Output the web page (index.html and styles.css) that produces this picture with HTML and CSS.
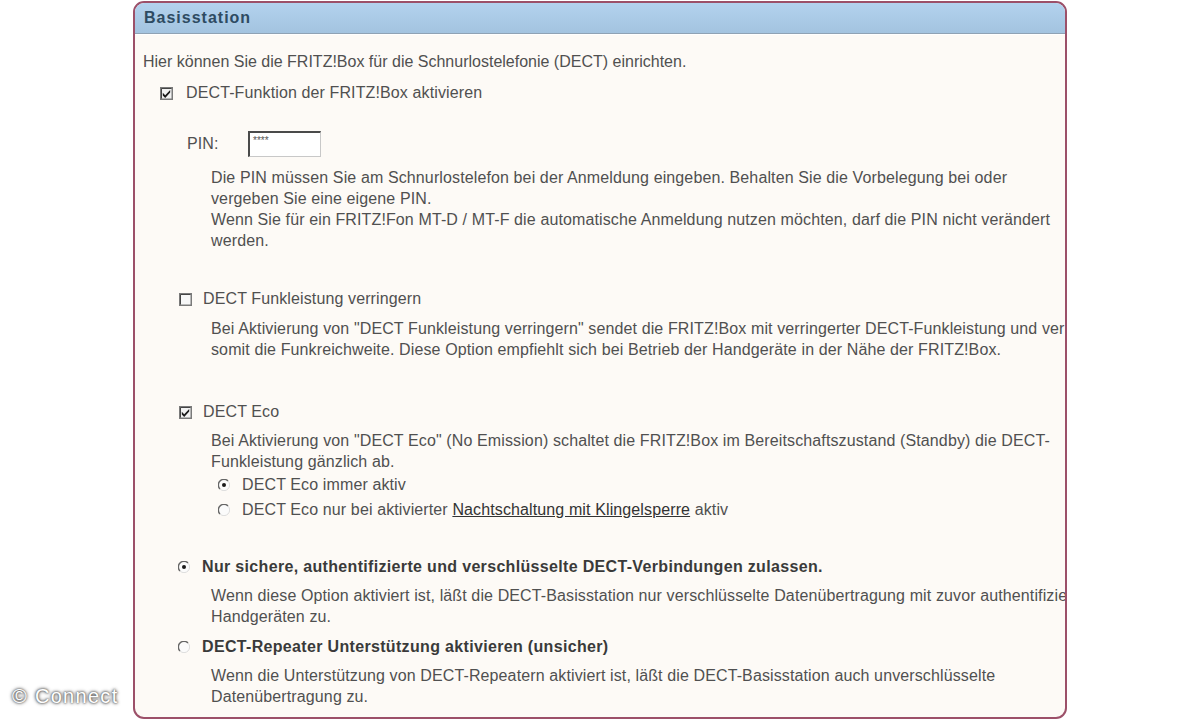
FILE: index.html
```html
<!DOCTYPE html>
<html lang="de">
<head>
<meta charset="utf-8">
<title>Basisstation</title>
<link rel="stylesheet" href="styles.css">
</head>
<body>
<div class="page">
  <div class="panel">
    <div class="head">Basisstation</div>
    <div class="content">
      <div class="intro">Hier können Sie die FRITZ!Box für die Schnurlostelefonie (DECT) einrichten.</div>

      <div class="row row-cb1">
        <svg class="cb" viewBox="0 0 13 13"><rect x="0.75" y="0.75" width="11.5" height="11.5" fill="#f2f2f2" stroke="#7a7a7a" stroke-width="1.5"/><path d="M1.5 11.5V1.5h10" fill="none" stroke="#444"/><path d="M2.8 5.8l2.4 2.5L10.2 3v2.6L5.2 10.9 2.8 8.4z" fill="#1a1a1a"/></svg>
        <span class="lbl">DECT-Funktion der FRITZ!Box aktivieren</span>
      </div>

      <div class="row row-pin">
        <span class="pinlbl">PIN:</span>
        <span class="pinbox">****</span>
      </div>

      <div class="desc desc1">Die PIN müssen Sie am Schnurlostelefon bei der Anmeldung eingeben. Behalten Sie die Vorbelegung bei oder<br>vergeben Sie eine eigene PIN.<br>Wenn Sie für ein FRITZ!Fon MT-D / MT-F die automatische Anmeldung nutzen möchten, darf die PIN nicht verändert<br>werden.</div>

      <div class="row row-cb2">
        <svg class="cb" viewBox="0 0 13 13"><rect x="0.75" y="0.75" width="11.5" height="11.5" fill="#f7f7f7" stroke="#7a7a7a" stroke-width="1.5"/><path d="M1.5 11.5V1.5h10" fill="none" stroke="#444"/></svg>
        <span class="lbl">DECT Funkleistung verringern</span>
      </div>
      <div class="desc desc2">Bei Aktivierung von "DECT Funkleistung verringern" sendet die FRITZ!Box mit verringerter DECT-Funkleistung und verringert<br>somit die Funkreichweite. Diese Option empfiehlt sich bei Betrieb der Handgeräte in der Nähe der FRITZ!Box.</div>

      <div class="row row-cb3">
        <svg class="cb" viewBox="0 0 13 13"><rect x="0.75" y="0.75" width="11.5" height="11.5" fill="#f2f2f2" stroke="#7a7a7a" stroke-width="1.5"/><path d="M1.5 11.5V1.5h10" fill="none" stroke="#444"/><path d="M2.8 5.8l2.4 2.5L10.2 3v2.6L5.2 10.9 2.8 8.4z" fill="#1a1a1a"/></svg>
        <span class="lbl">DECT Eco</span>
      </div>
      <div class="desc desc3">Bei Aktivierung von "DECT Eco" (No Emission) schaltet die FRITZ!Box im Bereitschaftszustand (Standby) die DECT-<br>Funkleistung gänzlich ab.</div>

      <div class="radios">
        <div class="row row-r">
          <svg class="rd" viewBox="0 0 12 12"><circle cx="6" cy="6" r="5.5" fill="#fbfbfb"/><path d="M10 2A5.5 5.5 0 0 0 2 10" fill="none" stroke="#666" stroke-width="1.4"/><path d="M2 10A5.5 5.5 0 0 0 10 2" fill="none" stroke="#ddd" stroke-width="1"/><circle cx="6" cy="6" r="2" fill="#1a1a1a"/></svg>
          <span class="lbl">DECT Eco immer aktiv</span>
        </div>
        <div class="row row-r">
          <svg class="rd" viewBox="0 0 12 12"><circle cx="6" cy="6" r="5.5" fill="#fbfbfb"/><path d="M10 2A5.5 5.5 0 0 0 2 10" fill="none" stroke="#666" stroke-width="1.4"/><path d="M2 10A5.5 5.5 0 0 0 10 2" fill="none" stroke="#ddd" stroke-width="1"/></svg>
          <span class="lbl">DECT Eco nur bei aktivierter <a class="link" href="#">Nachtschaltung mit Klingelsperre</a> aktiv</span>
        </div>
      </div>

      <div class="row row-b1">
        <svg class="rd" viewBox="0 0 12 12"><circle cx="6" cy="6" r="5.5" fill="#fbfbfb"/><path d="M10 2A5.5 5.5 0 0 0 2 10" fill="none" stroke="#666" stroke-width="1.4"/><path d="M2 10A5.5 5.5 0 0 0 10 2" fill="none" stroke="#ddd" stroke-width="1"/><circle cx="6" cy="6" r="2" fill="#1a1a1a"/></svg>
        <span class="lbl bold">Nur sichere, authentifizierte und verschlüsselte DECT-Verbindungen zulassen.</span>
      </div>
      <div class="desc desc4">Wenn diese Option aktiviert ist, läßt die DECT-Basisstation nur verschlüsselte Datenübertragung mit zuvor authentifizierten<br>Handgeräten zu.</div>

      <div class="row row-b2">
        <svg class="rd" viewBox="0 0 12 12"><circle cx="6" cy="6" r="5.5" fill="#fbfbfb"/><path d="M10 2A5.5 5.5 0 0 0 2 10" fill="none" stroke="#666" stroke-width="1.4"/><path d="M2 10A5.5 5.5 0 0 0 10 2" fill="none" stroke="#ddd" stroke-width="1"/></svg>
        <span class="lbl bold">DECT-Repeater Unterstützung aktivieren (unsicher)</span>
      </div>
      <div class="desc desc5">Wenn die Unterstützung von DECT-Repeatern aktiviert ist, läßt die DECT-Basisstation auch unverschlüsselte<br>Datenübertragung zu.</div>
    </div>
  </div>
  <div class="watermark">© Connect</div>
</div>
</body>
</html>
```
FILE: styles.css
```css
html, body {
  margin: 0;
  padding: 0;
  background: #ffffff;
}
body {
  width: 1200px;
  height: 720px;
  overflow: hidden;
  font-family: "Liberation Sans", Arial, sans-serif;
  color: #505050;
}
.page {
  position: relative;
  width: 1200px;
  height: 720px;
  padding-top: 1px;
  box-sizing: border-box;
}
.panel {
  margin-left: 133px;
  width: 934px;
  height: 718px;
  box-sizing: border-box;
  border: 2px solid #9c5069;
  border-radius: 11px;
  overflow: hidden;
  background: #fdfaf6;
}
.head {
  height: 30px;
  line-height: 30px;
  padding-left: 9px;
  font-size: 16px;
  letter-spacing: 1px;
  font-weight: bold;
  color: #2e4b62;
  background: linear-gradient(#b3d2ee, #a3c3df);
  border-bottom: 1px solid #8fa2b4;
  box-shadow: 0 1px 0 #ffffff;
}
.content {
  padding-left: 8px;
  white-space: nowrap;
  font-size: 16px;
  letter-spacing: 0.12px;
}
.intro {
  height: 20px;
  line-height: 20px;
  margin-top: 18px;
  letter-spacing: 0;
}
.row {
  display: flex;
  align-items: center;
  height: 20px;
}
.lbl {
  line-height: 20px;
}
.bold {
  font-weight: bold;
  color: #3a3a3a;
  letter-spacing: 0.33px;
}
.cb {
  width: 13px;
  height: 13px;
  flex: none;
}
.rd {
  width: 12px;
  height: 12px;
  flex: none;
}
.row-cb1 {
  margin-top: 11px;
  padding-left: 17px;
  gap: 13px;
}
.row-pin {
  margin-top: 28px;
  height: 26px;
  padding-left: 44px;
}
.pinlbl {
  width: 61px;
}
.pinbox {
  width: 73px;
  height: 26px;
  box-sizing: border-box;
  border: 1px solid #c8c8c8;
  border-top: 2px solid #4a4a4a;
  border-left: 2px solid #4a4a4a;
  background: #ffffff;
  font-size: 10px;
  letter-spacing: 0;
  line-height: 16px;
  padding-left: 3px;
  color: #555;
}
.desc {
  padding-left: 68px;
  line-height: 21px;
}
.desc1 {
  margin-top: 10px;
}
.row-cb2 {
  margin-top: 38px;
  padding-left: 36px;
  gap: 11px;
}
.desc2 {
  margin-top: 9px;
}
.row-cb3 {
  margin-top: 42px;
  padding-left: 36px;
  gap: 11px;
}
.desc3 {
  margin-top: 8px;
}
.radios {
  padding-left: 75px;
}
.row-r {
  height: 25px;
  gap: 12px;
}
.link {
  color: #333;
  text-decoration: underline;
}
.row-b1 {
  margin-top: 35px;
  padding-left: 35px;
  gap: 12px;
}
.desc4 {
  margin-top: 8px;
}
.row-b2 {
  margin-top: 10px;
  padding-left: 35px;
  gap: 12px;
}
.desc5 {
  margin-top: 8px;
}
.watermark {
  position: absolute;
  left: 12px;
  top: 685px;
  font-size: 20px;
  color: #ffffff;
  letter-spacing: 1.3px;
  text-shadow: 0 0 2px #555, 0 0 3px #666, 0 0 4px #888;
}
```
